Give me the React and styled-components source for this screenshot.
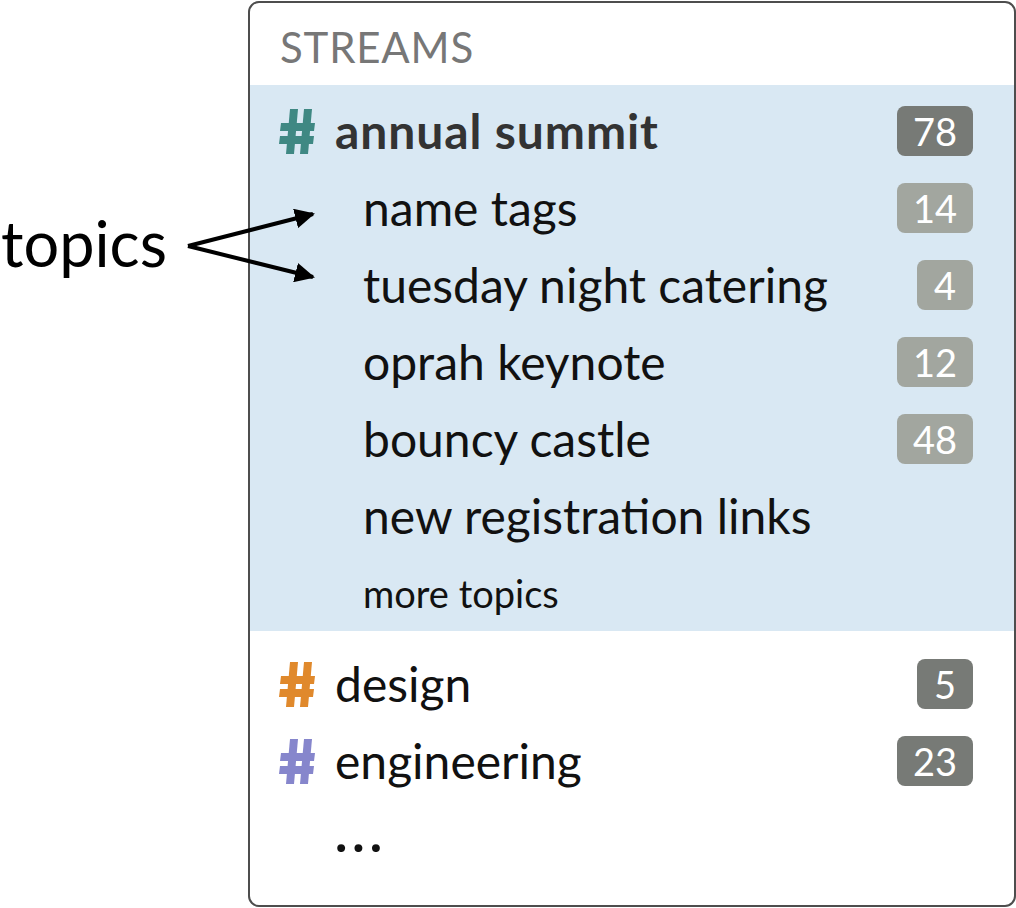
import React from "react";
import styled, { createGlobalStyle } from "styled-components";

const Global = createGlobalStyle`
  html, body { margin: 0; padding: 0; background: #ffffff; }
  body { font-family: Lato, "Noto Sans", sans-serif; }
`;

const Page = styled.div`
  width: 1016px;
  height: 908px;
  display: flex;
  padding-top: 1px;
  box-sizing: border-box;
  position: relative;
`;

const Annotation = styled.div`
  width: 248px;
  flex: none;
  position: relative;
  z-index: 2;
  display: flex;
  flex-direction: column;
  padding-top: 202px;
  box-sizing: border-box;
`;

const Label = styled.div`
  font-size: 63px;
  line-height: 80px;
  color: #000;
  margin-left: 1px;
`;

const Arrows = styled.svg`
  position: absolute;
  left: 180px;
  top: 200px;
  overflow: visible;
`;

const Panel = styled.div`
  width: 768px;
  height: 906px;
  box-sizing: border-box;
  border: 2px solid #4d4d4d;
  border-radius: 11px;
  display: flex;
  flex-direction: column;
  overflow: hidden;
`;

const Header = styled.div`
  height: 82px;
  display: flex;
  align-items: center;
  padding-left: 30px;
  padding-top: 6px;
  box-sizing: border-box;
  font-size: 42px;
  color: #777777;
  letter-spacing: 0.8px;
`;

const Highlight = styled.div`
  background: #d9e8f3;
  padding-top: 7px;
  display: flex;
  flex-direction: column;
`;

const Rest = styled.div`
  padding-top: 14px;
  display: flex;
  flex-direction: column;
`;

const Row = styled.div`
  height: 77px;
  display: flex;
  align-items: center;
  padding-left: ${(p) => p.$indent}px;
  padding-right: 41px;
`;

const HashBox = styled.svg`
  width: 36px;
  height: 45px;
  flex: none;
  margin-right: 20px;
  margin-top: 2px;
`;

const Name = styled.span`
  flex: 1;
  font-size: ${(p) => p.$size || 48}px;
  font-weight: ${(p) => (p.$bold ? 700 : 400)};
  color: ${(p) => (p.$bold ? "#333333" : "#111111")};
  letter-spacing: ${(p) => (p.$bold ? "0.9px" : "0")};
  white-space: nowrap;
`;

const Badge = styled.span`
  min-width: 56px;
  height: 50px;
  box-sizing: border-box;
  padding: 0 16px;
  border-radius: 8px;
  background: ${(p) => (p.$light ? "#a2a69f" : "#777a76")};
  color: #ffffff;
  font-size: 38px;
  display: flex;
  align-items: center;
  justify-content: center;
  flex: none;
`;

const Dots = styled.span`
  font-size: 52px;
  font-weight: 700;
  color: #111;
  letter-spacing: 5px;
  margin-bottom: 12px;
`;

const Hash = ({ color }) => (
  <HashBox viewBox="0 0 36 45">
    <g fill={color}>
      <polygon points="11,0 19,0 15,45 7,45" />
      <polygon points="25,0 33,0 29,45 21,45" />
      <polygon points="2,14 36,14 35,22 1,22" />
      <polygon points="1,27 35,27 34,35 0,35" />
    </g>
  </HashBox>
);

const topics = [
  { name: "name tags", count: 14 },
  { name: "tuesday night catering", count: 4 },
  { name: "oprah keynote", count: 12 },
  { name: "bouncy castle", count: 48 },
  { name: "new registration links" },
];

export default function App() {
  return (
    <>
      <Global />
      <Page>
        <Annotation>
          <Label>topics</Label>
          <Arrows width="140" height="90">
            <defs>
              <marker id="ah" viewBox="0 0 10 10" refX="9" refY="5" markerWidth="5" markerHeight="5" orient="auto">
                <path d="M0,0 L10,5 L0,10 Z" fill="#000" />
              </marker>
            </defs>
            <path d="M8,45 L133,13" stroke="#000" strokeWidth="4" fill="none" markerEnd="url(#ah)" />
            <path d="M8,45 L133,76" stroke="#000" strokeWidth="4" fill="none" markerEnd="url(#ah)" />
          </Arrows>
        </Annotation>
        <Panel>
          <Header>STREAMS</Header>
          <Highlight>
            <Row $indent={29}>
              <Hash color="#3f8883" />
              <Name $bold>annual summit</Name>
              <Badge>78</Badge>
            </Row>
            {topics.map((t) => (
              <Row key={t.name} $indent={113}>
                <Name>{t.name}</Name>
                {t.count != null && <Badge $light>{t.count}</Badge>}
              </Row>
            ))}
            <Row $indent={113}>
              <Name $size={38}>more topics</Name>
            </Row>
          </Highlight>
          <Rest>
            <Row $indent={29}>
              <Hash color="#e0892c" />
              <Name>design</Name>
              <Badge>5</Badge>
            </Row>
            <Row $indent={29}>
              <Hash color="#8686cc" />
              <Name>engineering</Name>
              <Badge>23</Badge>
            </Row>
            <Row $indent={85}>
              <Dots>...</Dots>
            </Row>
          </Rest>
        </Panel>
      </Page>
    </>
  );
}
